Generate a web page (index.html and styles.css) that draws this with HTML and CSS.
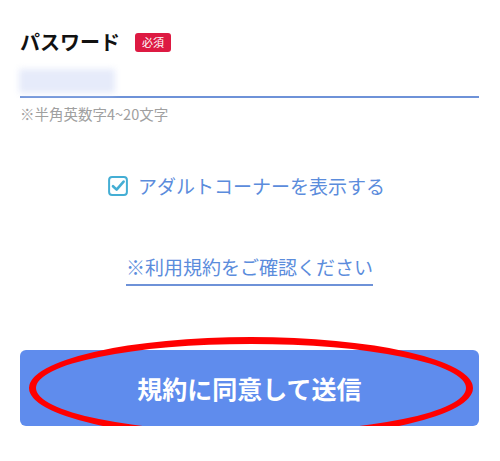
FILE: index.html
```html
<!DOCTYPE html>
<html lang="ja">
<head>
    <meta charset="UTF-8">
    <meta name="viewport" content="width=device-width, initial-scale=1.0">
    <title>パスワード</title>
    <link rel="stylesheet" href="styles.css">
</head>
<body>

<div id="form">
    <div class="label-row">
        <span class="label">パスワード</span>
        <span class="required">必須</span>
    </div>
    <div class="input">
        <div class="blur"></div>
    </div>
    <p class="hint">※半角英数字4~20文字</p>

    <div class="check-row">
        <span class="checkbox">
            <svg width="20" height="20" viewBox="0 0 20 20">
                <rect x="1.1" y="1.1" width="17.8" height="17.8" rx="3" fill="none" stroke="#44aed4" stroke-width="2"/>
                <path d="M5 10.2 L8.6 13.6 L15.6 5.6" fill="none" stroke="#44aed4" stroke-width="2.6" stroke-linecap="round" stroke-linejoin="round"/>
            </svg>
        </span>
        <span class="check-text">アダルトコーナーを表示する</span>
    </div>

    <div class="terms-row">
        <a class="terms" href="#">※利用規約をご確認ください</a>
    </div>

    <div class="submit-wrap">
        <button class="submit">規約に同意して送信</button>
        <div class="circle"></div>
    </div>
</div>

</body>
</html>
```

FILE: styles.css
```css
body {
    margin: 0;
    padding: 0;
    background: #ffffff;
    font-family: "Noto Sans CJK JP", "Noto Sans", sans-serif;
}
#form {
    padding: 29px 21px 0 20px;
}
.label-row {
    display: flex;
    align-items: center;
    height: 26px;
}
.label {
    font-size: 20px;
    font-weight: bold;
    color: #111111;
    line-height: 26px;
}
.required {
    margin-left: 15px;
    background: #dd1a42;
    color: #ffffff;
    font-size: 11px;
    line-height: 19px;
    padding: 0 7px;
    border-radius: 3px;
}
.input {
    margin-top: 14px;
    height: 27px;
    border-bottom: 2px solid #6e92d8;
}
.blur {
    width: 96px;
    height: 24px;
    margin-left: -1px;
    margin-top: 2px;
    background: #e6ebfa;
    filter: blur(3px);
}
.hint {
    margin: 7px 0 0;
    font-size: 14.5px;
    line-height: 18px;
    color: #a0a0a0;
}
.check-row {
    display: flex;
    justify-content: center;
    align-items: center;
    margin-top: 51px;
    gap: 10px;
    padding-right: 6px;
}
.checkbox {
    display: flex;
}
.check-text {
    font-size: 19px;
    line-height: 24px;
    color: #5b8cdc;
}
.terms-row {
    display: flex;
    justify-content: center;
    margin-top: 56px;
}
.terms {
    font-size: 19px;
    line-height: 26px;
    color: #5b8cdc;
    text-decoration: none;
    border-bottom: 2px solid #6e92d8;
    padding-bottom: 4px;
}
.submit-wrap {
    position: relative;
    margin-top: 64px;
}
.submit {
    display: block;
    width: 100%;
    height: 76px;
    border: none;
    border-radius: 6px;
    background: #5f8ced;
    color: #ffffff;
    font-family: "Noto Sans CJK JP", "Noto Sans", sans-serif;
    font-size: 25px;
    font-weight: bold;
}
.circle {
    position: absolute;
    left: 9px;
    top: -13px;
    width: 444px;
    height: 102px;
    box-sizing: border-box;
    border: 7px solid #ff0000;
    border-radius: 50%;
    pointer-events: none;
}
```
